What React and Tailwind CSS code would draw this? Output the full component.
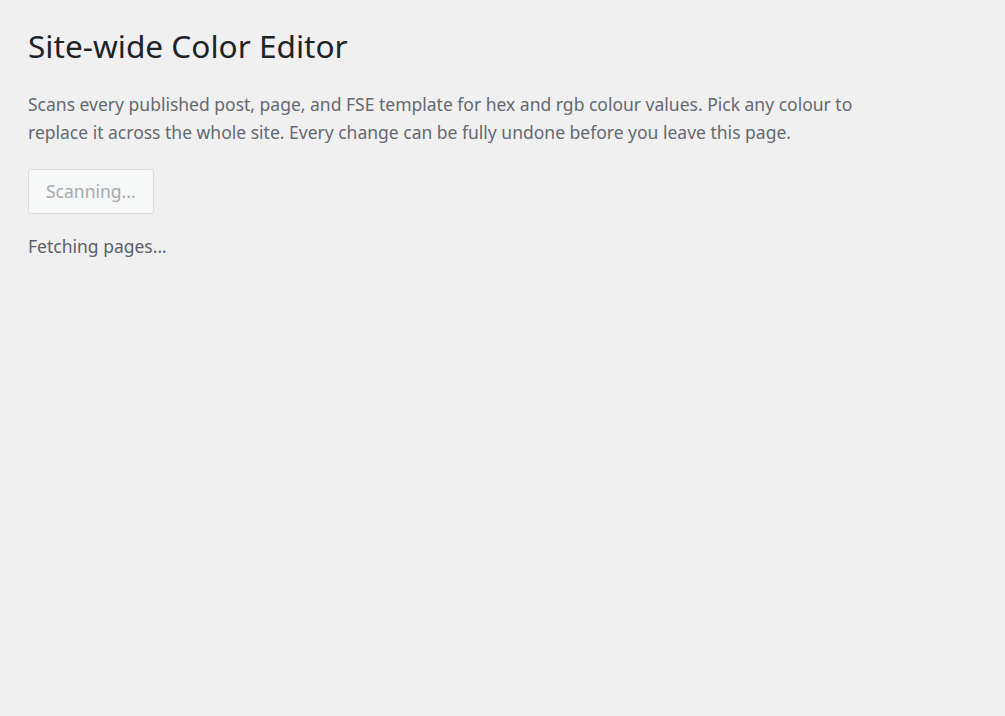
export default function App() {
  return (
    <div
      className="min-h-[716px] w-full bg-[#f0f0f1] px-7 pt-[22px]"
      style={{ fontFamily: '"Noto Sans", "Open Sans", sans-serif' }}
    >
      <h1 className="text-[31.6px] leading-[48px] font-normal text-[#1d2327]">Site-wide Color Editor</h1>
      <p className="mt-[20px] max-w-[860px] text-[17.5px] leading-[28px] text-[#646970]">
        Scans every published post, page, and FSE template for hex and rgb colour values. Pick any colour to replace it across the whole site. Every change can be fully undone before you leave this page.
      </p>
      <button
        disabled
        className="mt-[23px] h-[45px] rounded-[3px] border border-[#dcdcde] bg-[#f6f7f7] px-[17px] text-[17.5px] text-[#a7aaad]"
      >
        Scanning...
      </button>
      <p className="mt-[18px] text-[17.5px] leading-[28px] text-[#5c6168]">Fetching pages...</p>
    </div>
  );
}
